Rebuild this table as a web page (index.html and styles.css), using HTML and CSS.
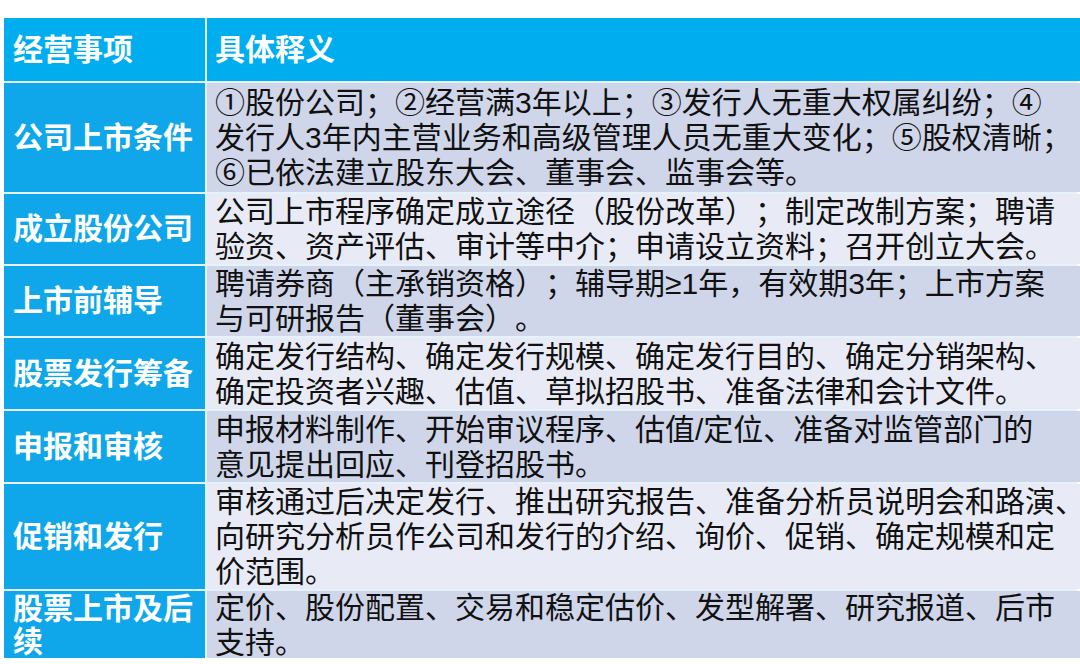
FILE: index.html
```html
<!DOCTYPE html>
<html lang="zh-CN">
<head>
<meta charset="utf-8">
<title>上市流程</title>
<link rel="stylesheet" href="styles.css">
</head>
<body>
<div class="page">
  <div class="table">
    <div class="cell head">经营事项</div>
    <div class="cell head head-right">具体释义</div>

    <div class="cell key">公司上市条件</div>
    <div class="cell val dark">①股份公司；②经营满3年以上；③发行人无重大权属纠纷；④<br>发行人3年内主营业务和高级管理人员无重大变化；⑤股权清晰；<br>⑥已依法建立股东大会、董事会、监事会等。</div>

    <div class="cell key">成立股份公司</div>
    <div class="cell val light">公司上市程序确定成立途径（股份改革）；制定改制方案；聘请<br>验资、资产评估、审计等中介；申请设立资料；召开创立大会。</div>

    <div class="cell key">上市前辅导</div>
    <div class="cell val dark">聘请券商（主承销资格）；辅导期≥1年，有效期3年；上市方案<br>与可研报告（董事会）。</div>

    <div class="cell key">股票发行筹备</div>
    <div class="cell val light">确定发行结构、确定发行规模、确定发行目的、确定分销架构、<br>确定投资者兴趣、估值、草拟招股书、准备法律和会计文件。</div>

    <div class="cell key">申报和审核</div>
    <div class="cell val dark">申报材料制作、开始审议程序、估值/定位、准备对监管部门的<br>意见提出回应、刊登招股书。</div>

    <div class="cell key">促销和发行</div>
    <div class="cell val light">审核通过后决定发行、推出研究报告、准备分析员说明会和路演、<br>向研究分析员作公司和发行的介绍、询价、促销、确定规模和定<br>价范围。</div>

    <div class="cell key key-top">股票上市及后<br>续</div>
    <div class="cell val dark">定价、股份配置、交易和稳定估价、发型解署、研究报道、后市<br>支持。</div>
  </div>
</div>
</body>
</html>
```

FILE: styles.css
```css
html, body {
  margin: 0;
  padding: 0;
  background: #ffffff;
}

.page {
  width: 1080px;
  height: 664px;
  padding: 18px 3px 0 4px;
  box-sizing: border-box;
}

.table {
  display: grid;
  grid-template-columns: 201px 1fr;
  grid-template-rows: 63px 109px 70px 70px 71px 71px 105px 67px;
  column-gap: 2px;
  row-gap: 2px;
  background: #e4f3fb;
  font-family: "Liberation Sans", "Noto Sans CJK SC", sans-serif;
  font-size: 30px;
  text-spacing-trim: space-all;
}

.cell {
  display: flex;
  align-items: center;
  box-sizing: border-box;
  white-space: nowrap;
}

.head {
  background: #00aeef;
  color: #ffffff;
  font-weight: 700;
  padding-left: 9px;
  line-height: 35px;
}

.head-right {
  padding-left: 8px;
}

.key {
  background: #0fa7ea;
  color: #ffffff;
  font-weight: 700;
  padding-left: 9px;
  line-height: 34px;
}

.key-top {
  line-height: 33px;
}

.val {
  color: #111111;
  padding-left: 8px;
  line-height: 35px;
}

.dark {
  background: #d0d6e9;
}

.light {
  background: #e8ebf5;
}
```
